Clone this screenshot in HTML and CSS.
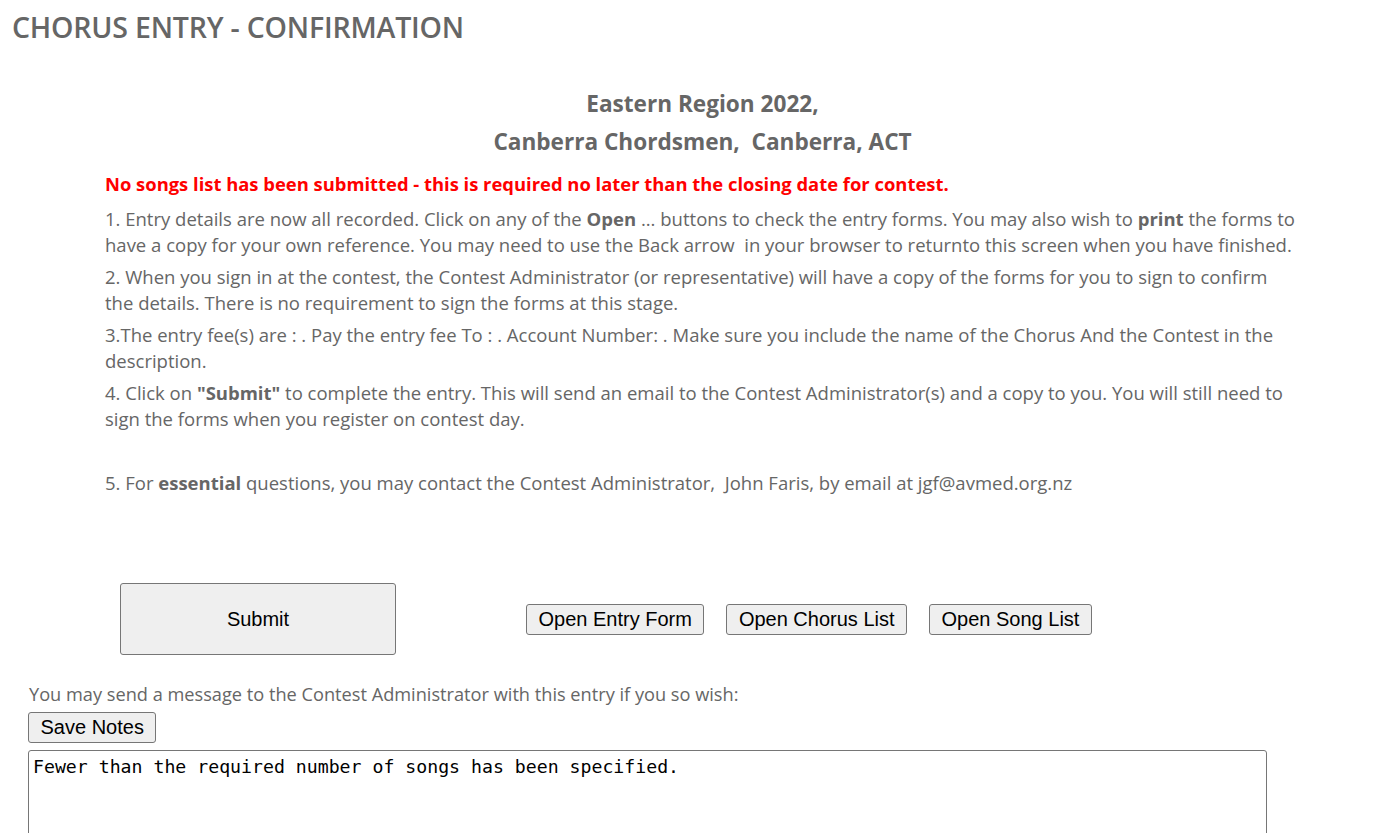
FILE: index.html
```html
<!DOCTYPE html>
<html>
<head>
<meta charset="utf-8">
<link rel="stylesheet" href="styles.css">
</head>
<body>
<h1 class="page-title">CHORUS ENTRY - CONFIRMATION</h1>
<div class="content">
  <h2 class="event">Eastern Region 2022,</h2>
  <h2 class="event">Canberra Chordsmen,&nbsp; Canberra, ACT</h2>
  <p class="warning">No songs list has been submitted - this is required no later than the closing date for contest.</p>
  <p class="step">1. Entry details are now all recorded. Click on any of the <b>Open</b> ... buttons to check the entry forms. You may also wish to <b>print</b> the forms to have a copy for your own reference. You may need to use the Back arrow&nbsp; in your browser to returnto this screen when you have finished.</p>
  <p class="step">2. When you sign in at the contest, the Contest Administrator (or representative) will have a copy of the forms for you to sign to confirm the details. There is no requirement to sign the forms at this stage.</p>
  <p class="step">3.The entry fee(s) are : . Pay the entry fee To : . Account Number: . Make sure you include the name of the Chorus And the Contest in the description.</p>
  <p class="step">4. Click on <b>"Submit"</b> to complete the entry. This will send an email to the Contest Administrator(s) and a copy to you. You will still need to sign the forms when you register on contest day.</p>
  <p class="step step-last">5. For <b>essential</b> questions, you may contact the Contest Administrator,&nbsp; John Faris, by email at jgf@avmed.org.nz</p>
</div>
<div class="actions">
  <button class="btn btn-submit">Submit</button>
  <div class="open-group">
    <button class="btn">Open Entry Form</button>
    <button class="btn">Open Chorus List</button>
    <button class="btn">Open Song List</button>
  </div>
</div>
<div class="notes">
  <p class="notes-label">You may send a message to the Contest Administrator with this entry if you so wish:</p>
  <button class="btn">Save Notes</button>
  <textarea class="notes-text">Fewer than the required number of songs has been specified.</textarea>
</div>
</body>
</html>
```
FILE: styles.css
```css
html, body {
  margin: 0;
  padding: 0;
  background: #fff;
}
body {
  font-family: "Open Sans", "Noto Sans", sans-serif;
  color: #666;
  overflow: hidden;
}
.page-title {
  margin: 0;
  padding: 8px 0 0 12px;
  font-size: 28.5px;
  font-weight: 600;
  line-height: 38px;
  color: #666;
  letter-spacing: -0.2px;
}
.content {
  margin: 39px 0 0 105px;
  width: 1195px;
}
.event {
  margin: 0;
  text-align: center;
  font-size: 22.6px;
  font-weight: 700;
  line-height: 38px;
  color: #666;
}
.warning {
  margin: 10px 0 9px;
  color: #f00;
  font-weight: 700;
  font-size: 18.4px;
  line-height: 26px;
}
.step {
  margin: 0 0 6px;
  font-size: 18.5px;
  line-height: 26px;
}
.step-last {
  margin-top: 38px;
}
.actions {
  display: flex;
  align-items: center;
  margin: 87px 0 0 120px;
}
.btn {
  font-family: "Liberation Sans", Arial, sans-serif;
  font-size: 20px;
  color: #000;
  background: #efefef;
  border: 1px solid #767676;
  border-radius: 3px;
  padding: 3px 11.5px;
  line-height: 23px;
}
.btn-submit {
  width: 276px;
  height: 72px;
}
.open-group {
  display: flex;
  gap: 22px;
  margin-left: 130px;
}
.notes {
  margin: 27px 0 0 28px;
}
.notes-label {
  margin: 0 0 6px 1px;
  font-size: 18.2px;
  line-height: 24px;
}
.notes-text {
  display: block;
  margin-top: 7px;
  width: 1239px;
  height: 120px;
  box-sizing: border-box;
  border: 1px solid #767676;
  border-radius: 3px;
  padding: 5px 4px;
  font-family: "DejaVu Sans Mono", monospace;
  font-size: 18.2px;
  color: #000;
  resize: none;
}
```
